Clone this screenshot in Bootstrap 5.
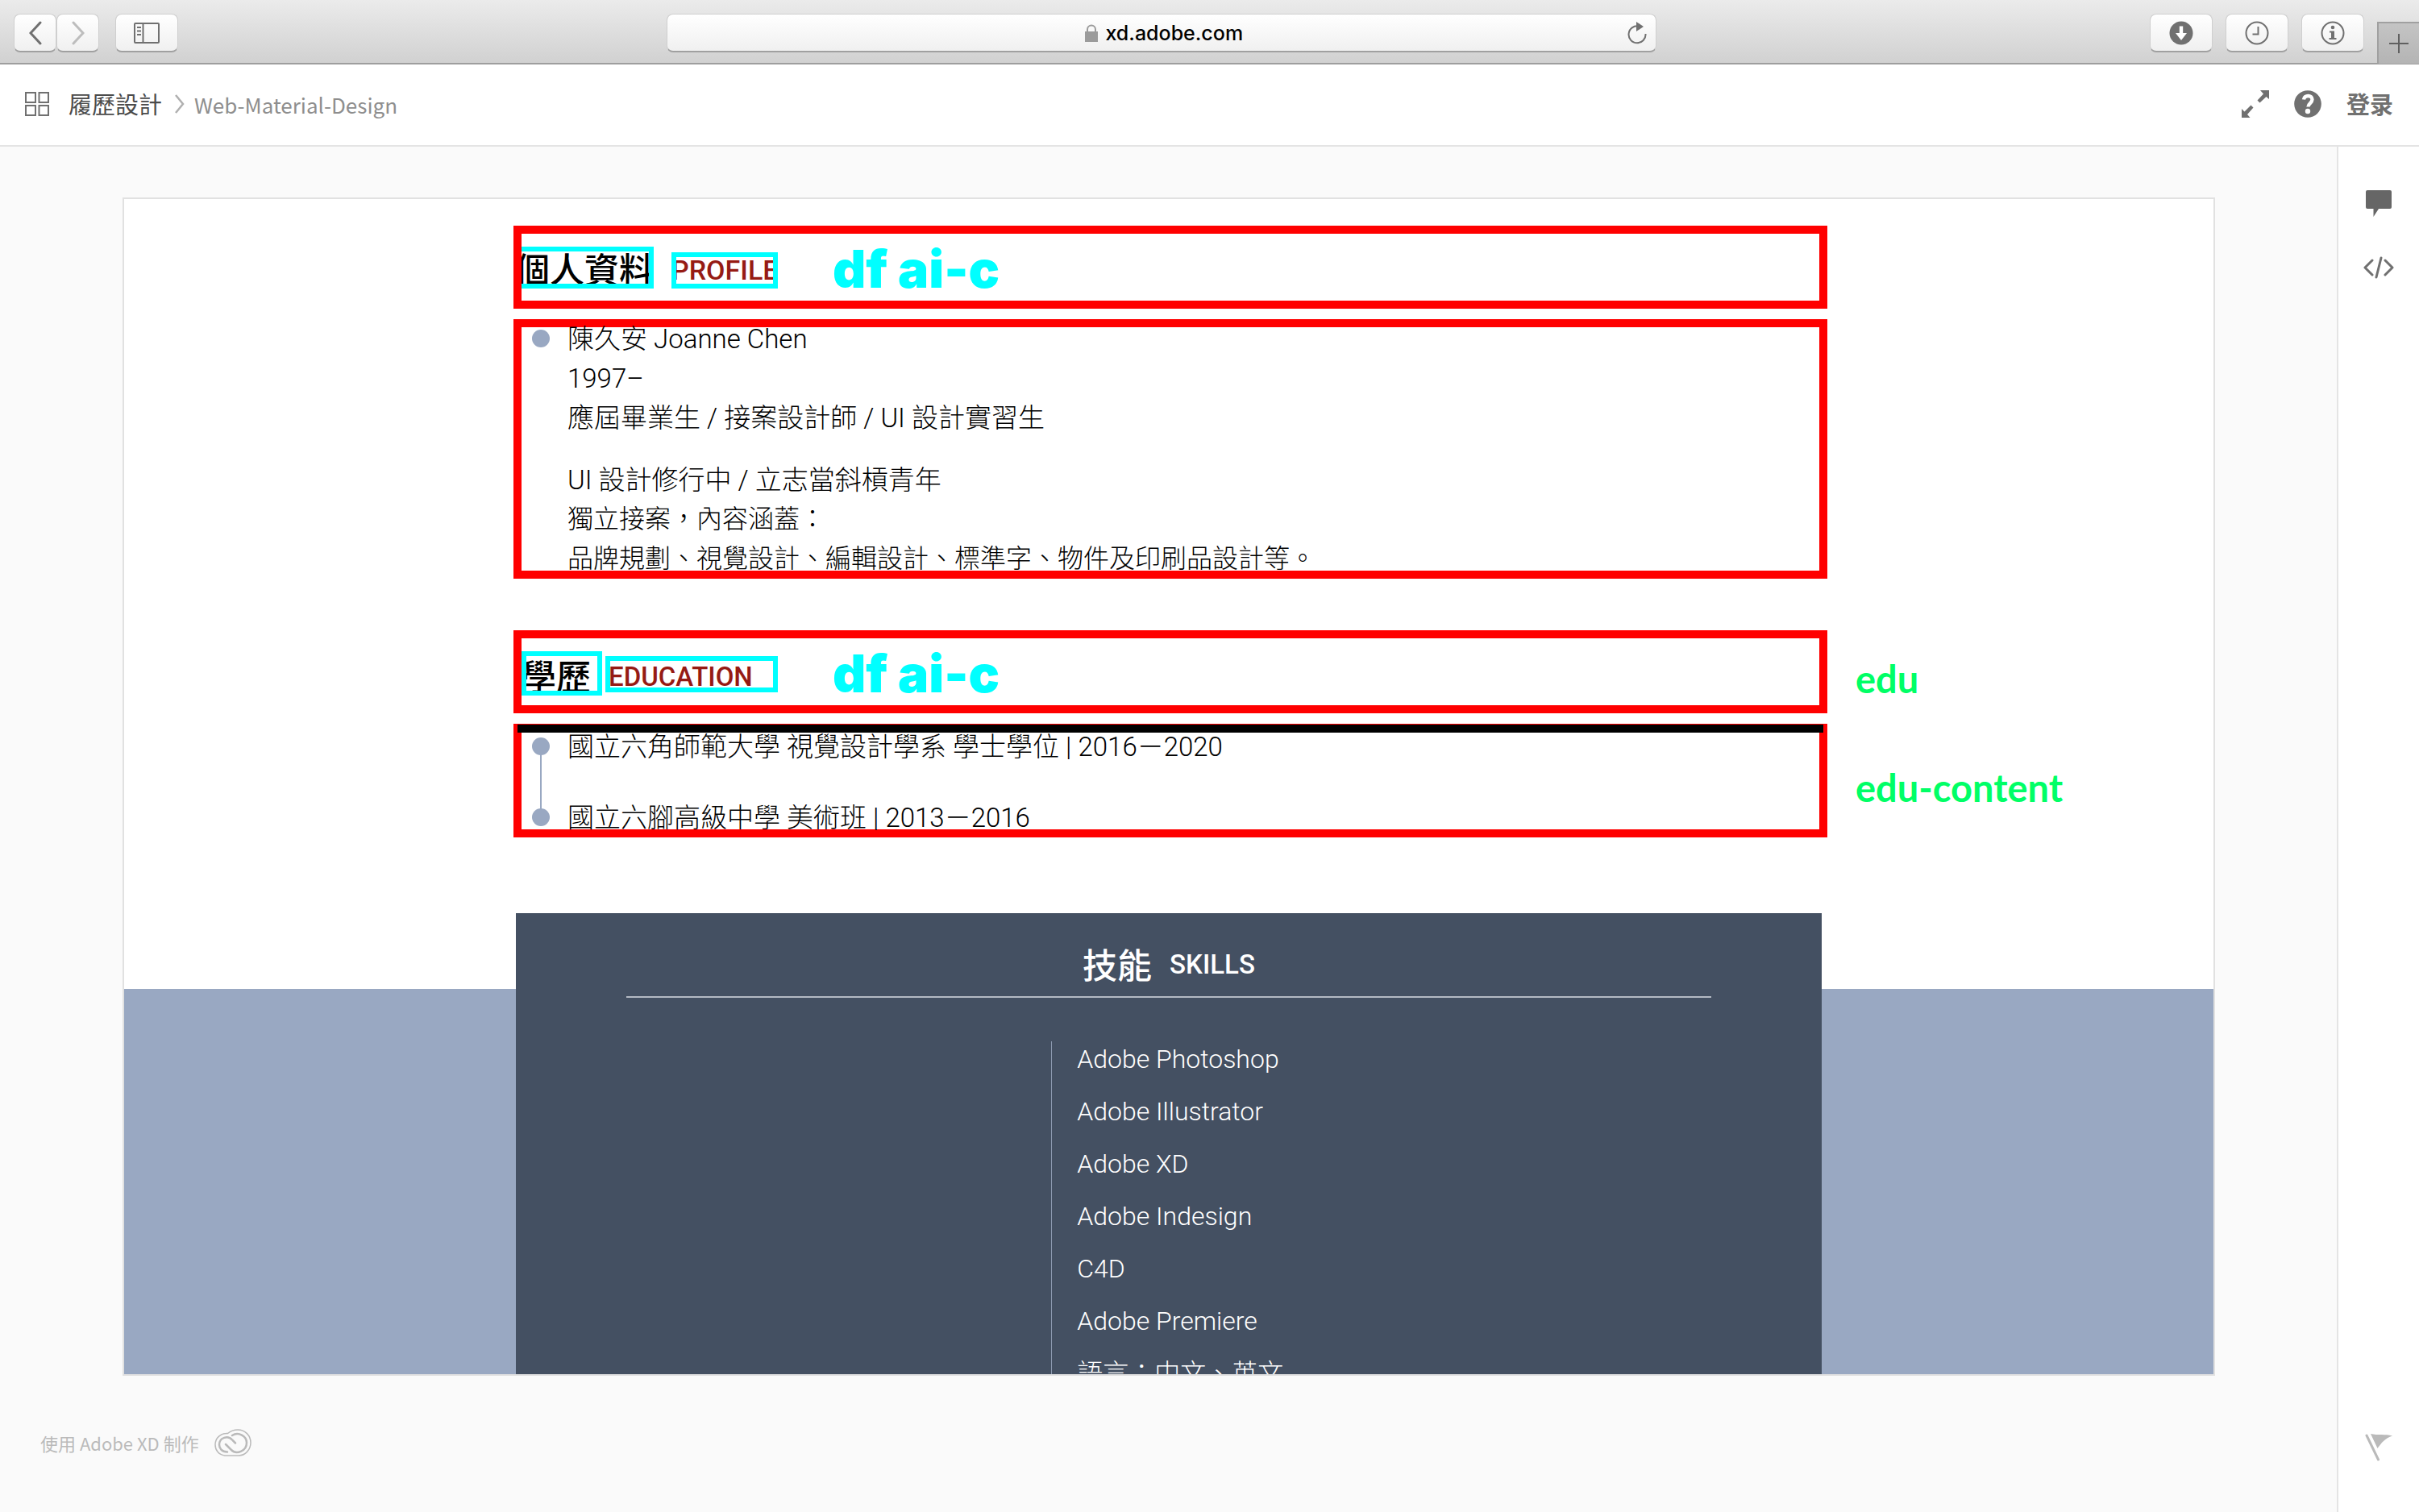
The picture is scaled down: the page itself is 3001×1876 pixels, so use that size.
<!DOCTYPE html>
<html lang="zh-Hant">
<head>
<meta charset="utf-8">
<meta name="viewport" content="width=device-width, initial-scale=1">
<title>Web-Material-Design</title>
<link rel="stylesheet" href="https://cdn.jsdelivr.net/npm/bootstrap@5.3.0/dist/css/bootstrap.min.css">
<style>
  :root { --cy: #00ffff; --slate: #445062; --mist: #99a8c2; --ic: #707070; }
  body { font-family: Roboto, "Noto Sans CJK TC", sans-serif; background: #fafafa; color: #000; }
  svg { display: block; flex: none; }

  /* browser chrome */
  .chrome { height: 80px; background: linear-gradient(#ebebeb, #d1d1d1); border-bottom: 2px solid #9e9e9e; padding: 4px 0 0 17px; }
  .key { height: 48px; padding: 0; border: 1px solid #cfcfcf; border-bottom: 2px solid #a0a0a0; border-radius: 8px; background: linear-gradient(#fff, #f0f0f0); display: flex; align-items: center; justify-content: center; }
  .key-s { width: 53px; }
  .key-l { width: 78px; }
  .key-gap { margin-left: 20px; }
  .address { width: 1228px; padding-right: 10px; color: #000; }
  .address input { width: 170px; font: 500 25px/36px Inter, sans-serif; }
  .bar-left { flex: 6 1 0; }
  .bar-right { flex: 7 1 0; }
  .newtab { width: 52px; height: 52px; border: 0; border-top: 2px solid #a0a0a0; border-left: 2px solid #a0a0a0; background: linear-gradient(#c4c4c4, #b4b4b4); border-radius: 0; }

  /* app header */
  .apphead { height: 102px; border-bottom: 2px solid #e4e4e4; padding: 0 32px 2px 31px; font-family: "Noto Sans CJK TC", sans-serif; font-size: 29px; }
  .crumb-now { color: #8e8e8e; font-size: 26px; margin-left: 12px; }
  .crumb-root { color: #4b4b4b; }
  .tools { gap: 31px; }
  .login { color: var(--ic); font-family: "Noto Sans CJK SC", sans-serif; font-weight: 700; }

  /* workspace */
  .rail { width: 102px; border-left: 2px solid #e4e4e4; padding: 54px 0 63px; }
  .stage { margin: 63px 151px 0 152px; border: 2px solid #e1e1e1; padding-top: 33px; }
  .sheet { width: 1620px; }
  .foot { height: 169px; padding: 0 0 4px 50px; gap: 19px; color: #bababa; font: 22px "Noto Sans CJK SC", sans-serif; }

  /* annotated frames: the outline is drawn over the content */
  .frame { position: relative; margin: 0 -7px 0 -3px; outline: 10px solid #f00; outline-offset: -10px; }
  .frame + .frame { margin-top: 13px; }
  .frame.frame-next { margin-top: 64px; }
  .frame-head { height: 103px; padding-left: 2px; }
  .tag { outline: 6px solid var(--cy); outline-offset: -6px; margin: 0; font-weight: 500; }
  .tag-zh { font: 500 43px/51px "Noto Sans CJK TC", sans-serif; padding-top: 1px; }
  .tag-en { font-size: 34px; line-height: 45px; color: #961b14; margin: 8px 0 0 22px; }
  .edu-zh { padding-top: 4px; width: 100px; margin: 4px 4px 0 8px; }
  .edu-en { padding: 6px 0 0 4px; width: 214px; line-height: 39px; font-size: 33px; margin: 6px 0 0; }
  .hint { position: absolute; left: 396px; color: var(--cy); font: 900 64px/80px Inter, sans-serif; padding-top: 4px; }
  .label-g { position: absolute; left: 100%; margin-left: 35px; padding-top: 16px; color: #00ff66; font: 700 47px/60px Lato, sans-serif; white-space: nowrap; }
  .body-top { border-top: 10px solid #000; position: absolute; inset: 1px 5px auto 5px; z-index: 1; }

  .facts { padding-left: 23px; font-size: 33px; font-weight: 300; line-height: 49px; }
  .facts li { gap: 22px; position: relative; }
  .facts p { margin: 0 0 28px; }
  .facts p:last-child { margin: 0; }
  .scope { font-size: 32px; }
  .dot { width: 22px; height: 22px; border-radius: 50%; background: var(--mist); margin-top: 13px; flex: none; }
  .edu-facts { padding-top: 4px; }
  .edu-facts li + li { margin-top: 39px; }
  .edu-facts li + li::before { content: ""; position: absolute; left: 10px; bottom: 30px; height: 80px; border-left: 2px solid var(--mist); }

  .band { margin-top: 94px; background: linear-gradient(transparent 94px, var(--mist) 94px); }
  .skills { background: var(--slate); color: #fff; }
  .skills-head { height: 105px; margin: 0 137px; padding-top: 20px; border-bottom: 2px solid #b4bac3; gap: 22px; font-size: 33px; font-weight: 500; }
  .skills-head h2 { font: 500 43px/60px "Noto Sans CJK TC", sans-serif; margin: 0; }
  .skills-head span { padding-top: 4px; }
  .skill-list { margin: 54px 0 0 41%; padding: 0 0 60px 31px; border-left: 1px solid #8d9ab0; font-size: 32px; font-weight: 300; line-height: 44px; gap: 21px; }
</style>
</head>
<body>
<div class="vh-100 d-flex flex-column overflow-hidden">

  <nav class="chrome d-flex align-items-center flex-shrink-0" aria-label="瀏覽器">
    <div class="bar-left d-flex">
      <button class="key key-s" type="button" aria-label="上一頁"><svg width="16" height="30" viewBox="0 0 16 30" fill="none" stroke="#707070" stroke-width="3" stroke-linecap="round"><path d="M14 2 2 15l12 13"/></svg></button>
      <button class="key key-s" type="button" aria-label="下一頁"><svg width="16" height="30" viewBox="0 0 16 30" fill="none" stroke="#bdbdbd" stroke-width="3" stroke-linecap="round"><path d="m2 2 12 13L2 28"/></svg></button>
      <button class="key key-l key-gap" type="button" aria-label="側邊欄"><svg width="32" height="26" viewBox="0 0 32 26" fill="none" stroke="#707070" stroke-width="2"><rect x="1" y="1" width="30" height="24" rx="1"/><path d="M11.500 1v24M4 6h5M4 10.500h5M4 15h5"/></svg></button>
    </div>
    <div class="key address">
      <label class="d-flex align-items-center flex-grow-1 justify-content-center ps-4 ms-3">
        <svg class="me-2" width="18" height="22" viewBox="0 0 18 22"><path d="M1 9h16v13H1z" fill="#9b9b9b"/><path d="M4 10V6.500a5 5 0 0 1 10 0V10" fill="none" stroke="#9b9b9b" stroke-width="2"/></svg>
        <input class="border-0 bg-transparent p-0" type="text" value="xd.adobe.com" aria-label="網址">
      </label>
      <button class="btn p-0 border-0" type="button" aria-label="重新載入"><svg width="26" height="30" viewBox="0 0 26 30"><path d="M15 6.500A10.500 10.500 0 1 0 23.500 16" fill="none" stroke="#707070" stroke-width="2"/><path d="m12 1 9 6-9 6z" fill="#707070"/></svg></button>
    </div>
    <div class="bar-right d-flex justify-content-end align-items-center">
      <div class="d-flex gap-3 me-3">
        <button class="key key-l" type="button" aria-label="下載"><svg width="30" height="30" viewBox="0 0 30 30"><circle cx="15" cy="15" r="14.500" fill="#707070"/><path d="M12.800 6.500h4.400V15H22l-7 9-7-9h4.800z" fill="#fff"/></svg></button>
        <button class="key key-l" type="button" aria-label="歷史"><svg width="30" height="30" viewBox="0 0 30 30" fill="none" stroke="#707070" stroke-width="2"><circle cx="15" cy="15" r="13.500"/><path d="M16.500 7v9.500H9.500"/></svg></button>
        <button class="key key-l" type="button" aria-label="資訊"><svg width="30" height="30" viewBox="0 0 30 30"><circle cx="15" cy="15" r="13.500" fill="none" stroke="#707070" stroke-width="2"/><circle cx="15" cy="8" r="2.300" fill="#707070"/><path d="M11 12.500h6v8.500h2.500v2h-9v-2H13v-6.500h-2z" fill="#707070"/></svg></button>
      </div>
      <button class="newtab p-0 d-flex align-items-center justify-content-center align-self-end mt-4" type="button" aria-label="新增分頁"><svg width="24" height="24" viewBox="0 0 24 24" stroke="#606060" stroke-width="2"><path d="M12 0v24M0 12h24"/></svg></button>
    </div>
  </nav>

  <header class="apphead bg-white d-flex align-items-center flex-shrink-0">
    <button class="btn p-0 border-0" type="button" aria-label="畫板"><svg width="30" height="30" viewBox="0 0 30 30" fill="none" stroke="#707070" stroke-width="2"><path d="M1 1h12v12H1zM17.500 1h11.500v12H17.500zM1 17h12v12H1zM17.500 17h11.500v12H17.500z"/></svg></button>
    <a class="crumb-root text-decoration-none ms-4" href="#">履歷設計</a>
    <svg class="ms-3" width="12" height="24" viewBox="0 0 12 24" fill="none" stroke="#b0b0b0" stroke-width="2.500"><path d="m1 1 9 11-9 11"/></svg>
    <span class="crumb-now">Web-Material-Design</span>
    <div class="tools ms-auto d-flex align-items-center">
      <button class="btn p-0 border-0" type="button" aria-label="全螢幕"><svg width="34" height="34" viewBox="0 0 34 34" fill="#707070"><path d="M23 0h11v11l-3.500-3-8 7.500-3-3 7.500-8zM0 34V23l3.500 3.500 8-8 3 3-7.500 8.500 3.500 4z"/></svg></button>
      <button class="btn p-0 border-0" type="button" aria-label="說明"><svg width="34" height="34" viewBox="0 0 34 34"><circle cx="17" cy="17" r="16.800" fill="#707070"/><path d="M12 11.500c.5-6 10.500-6 10.500-.2 0 4.700-5 4.700-5 9.200" fill="none" stroke="#fff" stroke-width="4.400"/><circle cx="17" cy="26" r="3.200" fill="#fff"/></svg></button>
      <a class="login text-decoration-none" href="#">登录</a>
    </div>
  </header>

  <div class="d-flex flex-grow-1 overflow-hidden">
    <main class="flex-grow-1 d-flex flex-column overflow-hidden">
      <article class="stage bg-white flex-grow-1 overflow-hidden">
        <div class="sheet mx-auto">
          <div class="frame frame-head d-flex align-items-center">
            <h2 class="tag tag-zh">個人資料</h2>
            <span class="tag tag-en">PROFILE</span>
            <span class="hint">df ai-c</span>
          </div>
          <ul class="frame facts list-unstyled mb-0">
            <li class="d-flex"><span class="dot"></span>
              <div>
                <p>陳久安 Joanne Chen<br>1997–<br>應屆畢業生 / 接案設計師 / UI 設計實習生</p>
                <p>UI 設計修行中 / 立志當斜槓青年<span class="scope d-block">獨立接案，內容涵蓋：<br>品牌規劃、視覺設計、編輯設計、標準字、物件及印刷品設計等。</span></p>
              </div>
            </li>
          </ul>

          <div class="frame frame-head frame-next d-flex align-items-center">
            <h2 class="tag tag-zh edu-zh">學歷</h2>
            <span class="tag tag-en edu-en">EDUCATION</span>
            <span class="hint">df ai-c</span>
            <span class="label-g">edu</span>
          </div>
          <div class="frame">
            <div class="body-top"></div>
            <ul class="facts edu-facts list-unstyled mb-0">
              <li class="d-flex"><span class="dot"></span><span>國立六角師範大學 視覺設計學系 學士學位 | 2016－2020</span></li>
              <li class="d-flex"><span class="dot"></span><span>國立六腳高級中學 美術班 | 2013－2016</span></li>
            </ul>
            <span class="label-g top-50 translate-middle-y">edu-content</span>
          </div>
        </div>

        <section class="band">
          <div class="sheet skills mx-auto">
            <div class="skills-head d-flex align-items-center justify-content-center"><h2>技能</h2><span>SKILLS</span></div>
            <div class="overflow-hidden">
              <ul class="skill-list list-unstyled d-flex flex-column">
                <li>Adobe Photoshop</li>
                <li>Adobe Illustrator</li>
                <li>Adobe XD</li>
                <li>Adobe Indesign</li>
                <li>C4D</li>
                <li>Adobe Premiere</li>
                <li>語言：中文、英文</li>
              </ul>
            </div>
          </div>
        </section>
      </article>
      <footer class="foot d-flex align-items-center flex-shrink-0">
        <span>使用 Adobe XD 制作</span>
        <svg width="46" height="34" viewBox="0 0 46 34" fill="none" stroke="#bababa" stroke-linecap="round"><path d="M13 33C5 32 1 26 1 19.500 1 11 8 5 16.500 5.500 20 2.500 24 1 29 1c9 0 16 7 16 16s-7 16-15 16z" stroke-width="1.500"/><path d="M16 28.500C9 28.500 6 24 6 19.500c0-9 11-12 16-6l4 4M22 8c8-5 18 1 18 9 0 11-13 15-19 9l-7-7" stroke-width="2.500"/></svg>
      </footer>
    </main>
    <aside class="rail bg-white d-flex flex-column align-items-center flex-shrink-0">
      <button class="btn p-0 border-0" type="button" aria-label="註解"><svg width="32" height="34" viewBox="0 0 32 34" fill="#666"><path d="M2 0h28a2 2 0 0 1 2 2v19a2 2 0 0 1-2 2H16L9.500 33V23H2a2 2 0 0 1-2-2V2a2 2 0 0 1 2-2z"/></svg></button>
      <button class="btn p-0 border-0 mt-5" type="button" aria-label="程式碼"><svg width="38" height="28" viewBox="0 0 38 28" fill="none" stroke="#707070" stroke-width="3" stroke-linecap="round" stroke-linejoin="round"><path d="M11 5 2 14l9 9M27 5l9 9-9 9M22 2l-6 24"/></svg></button>
      <button class="btn p-0 border-0 mt-auto" type="button" aria-label="檢舉"><svg width="34" height="34" viewBox="0 0 34 34" fill="#bababa"><path d="M7 0c9 2 18 0 27 2.500C25 5 20 12 15.500 18z"/><path d="m2 2 14.500 30" stroke="#bababa" stroke-width="3" stroke-linecap="round"/></svg></button>
    </aside>
  </div>
</div>
<script src="https://cdn.jsdelivr.net/npm/bootstrap@5.3.0/dist/js/bootstrap.bundle.min.js"></script>
</body>
</html>
